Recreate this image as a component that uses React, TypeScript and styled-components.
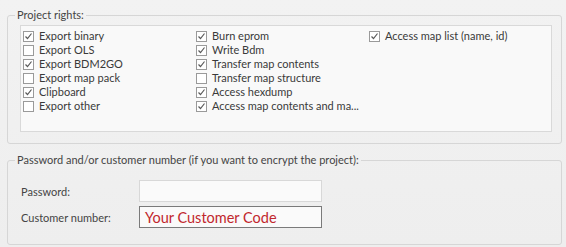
import { createGlobalStyle, styled } from "styled-components";

const GlobalStyle = createGlobalStyle`
  html, body {
    margin: 0;
    padding: 0;
    background: #f0f0f0;
  }
  body {
    font-family: Lato, "Noto Sans", sans-serif;
    font-size: 11px;
    color: #3a3a3a;
  }
`

const Page = styled.div`
  width: 566px;
  height: 247px;
  padding: 7px 4px 0 7px;
  box-sizing: border-box;
  background: linear-gradient(#f2f2f2, #eeeeee);
  display: flex;
  flex-direction: column;
  gap: 8px;
`

const Group = styled.fieldset<{ $height: number }>`
  margin: 0;
  padding: 0;
  height: ${(p) => p.$height}px;
  box-sizing: border-box;
  border: 1px solid #d6d6d6;
  border-radius: 3px;
  min-width: 0;
`

const Legend = styled.legend`
  margin-left: 7px;
  padding: 0 2px;
  line-height: 16px;
  color: #444;
`

const Panel = styled.div`
  margin: 2px 9px 0 12px;
  height: 107px;
  box-sizing: border-box;
  background: #f9f9f9;
  border: 1px solid #d9d9d9;
  padding: 3px 0 0 2px;
  display: grid;
  grid-template-columns: repeat(3, 173px);
  grid-auto-flow: column;
  grid-template-rows: repeat(6, 14px);
`

const Item = styled.label`
  display: flex;
  align-items: center;
  gap: 4px;
  height: 14px;
  white-space: nowrap;
  line-height: 14px;
`

const Box = styled.span`
  width: 11px;
  height: 11px;
  box-sizing: border-box;
  border: 1px solid #9a9a9a;
  background: #fff;
  display: flex;
  align-items: center;
  justify-content: center;
  flex-shrink: 0;
  margin-right: 1px;
`

const Form = styled.div`
  display: grid;
  grid-template-columns: 118px 183px;
  row-gap: 4px;
  padding: 12px 0 0 13px;
`

const FieldLabel = styled.div`
  display: flex;
  align-items: center;
  height: 22px;
  color: #444;
`

const Input = styled.div<{ $dark?: boolean }>`
  height: 22px;
  box-sizing: border-box;
  background: #fafafa;
  border: 1px solid ${(p) => (p.$dark ? "#7a7a7a" : "#d8d8d8")};
  display: flex;
  align-items: center;
  padding-left: 5px;
  font-size: 14.5px;
  color: #c1272d;
`

const Check = ({ checked }: { checked: boolean }) => (
  <Box>
    {checked && (
      <svg width="9" height="9" viewBox="0 0 9 9">
        <path d="M1.5 4.5 L3.5 6.5 L7.5 1.5" fill="none" stroke="#5a5a5a" strokeWidth="1.2" />
      </svg>
    )}
  </Box>
)

const rights: [string, boolean][] = [
  ["Export binary", true],
  ["Export OLS", false],
  ["Export BDM2GO", true],
  ["Export map pack", false],
  ["Clipboard", true],
  ["Export other", false],
  ["Burn eprom", true],
  ["Write Bdm", true],
  ["Transfer map contents", true],
  ["Transfer map structure", false],
  ["Access hexdump", true],
  ["Access map contents and ma...", true],
  ["Access map list (name, id)", true],
]

const App = () => {
  return (
    <>
      <GlobalStyle />
      <Page>
        <Group $height={137}>
          <Legend>Project rights:</Legend>
          <Panel>
            {rights.map(([label, checked]) => (
              <Item key={label}>
                <Check checked={checked} />
                {label}
              </Item>
            ))}
          </Panel>
        </Group>
        <Group $height={93}>
          <Legend>Password and/or customer number (if you want to encrypt the project):</Legend>
          <Form>
            <FieldLabel>Password:</FieldLabel>
            <Input />
            <FieldLabel>Customer number:</FieldLabel>
            <Input $dark>Your Customer Code</Input>
          </Form>
        </Group>
      </Page>
    </>
  )
}

export default App
